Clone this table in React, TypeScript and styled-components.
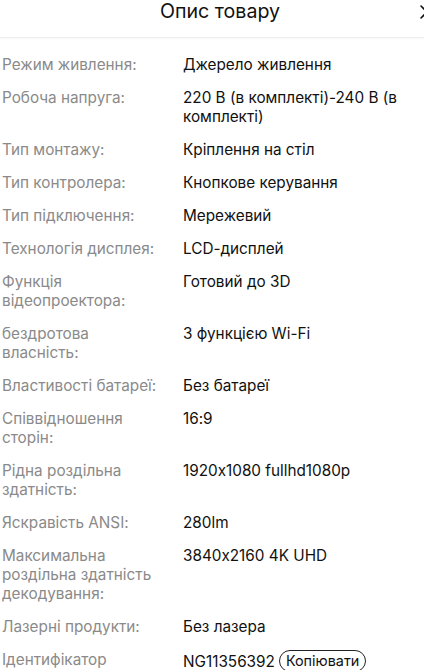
import React from "react";
import styled, { createGlobalStyle } from "styled-components";

const Global = createGlobalStyle`
  html, body {
    margin: 0;
    padding: 0;
    background: #ffffff;
    overflow: hidden;
  }
  body {
    font-family: Inter, "Noto Sans", "Liberation Sans", sans-serif;
    font-feature-settings: "calt" 0;
    -webkit-font-smoothing: antialiased;
  }
`;

const Page = styled.div`
  width: 440px;
  background: #fff;
`;

const Header = styled.header`
  position: relative;
  height: 37px;
  display: flex;
  align-items: center;
  justify-content: center;
  border-bottom: 1px solid #ececec;
  box-shadow: 0 1px 2px rgba(0, 0, 0, 0.03);
`;

const Title = styled.h1`
  margin: 0;
  margin-top: -16px;
  font-size: 19.6px;
  font-weight: 400;
  color: #111;
`;

const Close = styled.button`
  position: absolute;
  right: 5px;
  top: 5px;
  width: 16px;
  height: 14px;
  padding: 0;
  border: none;
  background: none;
  display: flex;
  align-items: center;
  justify-content: center;
`;

const List = styled.dl`
  margin: 0;
  padding: 10px 0 0 2px;
`;

const Row = styled.div`
  display: grid;
  grid-template-columns: 162px 1fr;
  column-gap: 19px;
  padding: 7px 0;
  font-size: 15.3px;
  line-height: 19px;
`;

const Label = styled.dt`
  margin: 0;
  color: #8a8a8a;
`;

const Value = styled.dd`
  margin: 0;
  color: #111;
  padding-right: 14px;
`;

const CopyButton = styled.button`
  margin-left: 4px;
  font-family: inherit;
  font-feature-settings: "calt" 0;
  font-size: 14.4px;
  line-height: 17px;
  color: #111;
  background: #fff;
  border: 1px solid #222;
  border-radius: 11px;
  padding: 1px 6px 2px;
  vertical-align: 1px;
`;

const rows: [string, string][] = [
  ["Режим живлення:", "Джерело живлення"],
  ["Робоча напруга:", "220 В (в комплекті)-240 В (в комплекті)"],
  ["Тип монтажу:", "Кріплення на стіл"],
  ["Тип контролера:", "Кнопкове керування"],
  ["Тип підключення:", "Мережевий"],
  ["Технологія дисплея:", "LCD-дисплей"],
  ["Функція відеопроектора:", "Готовий до 3D"],
  ["бездротова власність:", "З функцією Wi-Fi"],
  ["Властивості батареї:", "Без батареї"],
  ["Співвідношення сторін:", "16:9"],
  ["Рідна роздільна здатність:", "1920x1080 fullhd1080p"],
  ["Яскравість ANSI:", "280lm"],
  ["Максимальна роздільна здатність декодування:", "3840x2160 4K UHD"],
  ["Лазерні продукти:", "Без лазера"],
];

export default function App() {
  return (
    <Page>
      <Global />
      <Header>
        <Title>Опис товару</Title>
        <Close aria-label="Закрити">
          <svg width="16" height="14" viewBox="0 0 16 14">
            <path d="M2 1 L14 13 M14 1 L2 13" stroke="#111" strokeWidth="1.6" strokeLinecap="round" fill="none" />
          </svg>
        </Close>
      </Header>
      <List>
        {rows.map(([l, v]) => (
          <Row key={l}>
            <Label>{l}</Label>
            <Value>{v}</Value>
          </Row>
        ))}
        <Row>
          <Label>Ідентифікатор</Label>
          <Value>
            NG11356392<CopyButton>Копіювати</CopyButton>
          </Value>
        </Row>
      </List>
    </Page>
  );
}
